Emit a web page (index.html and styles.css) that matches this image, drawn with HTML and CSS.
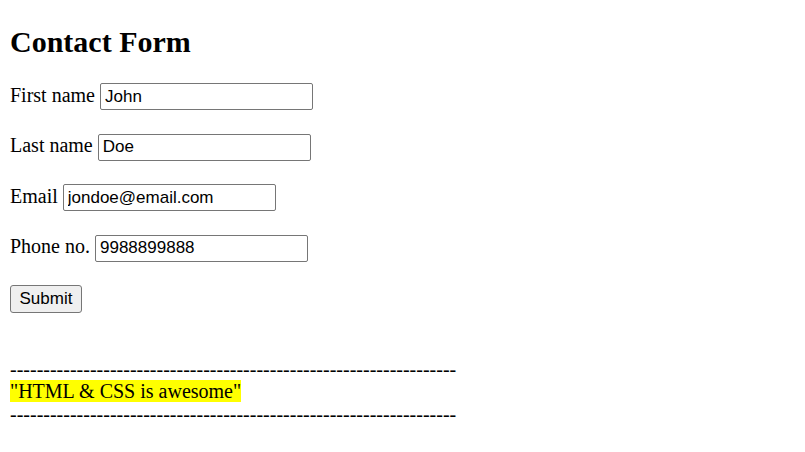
FILE: index.html
```html
<!DOCTYPE html>
<html lang="en">
<head>
<meta charset="utf-8">
<title>Contact Form</title>
<link rel="stylesheet" href="styles.css">
</head>
<body>
<section class="page">
  <h1 class="title">Contact Form</h1>
  <form class="form">
    <p class="row"><label for="fn">First name</label> <input class="field w-first" id="fn" type="text" value="John"></p>
    <p class="row"><label for="ln">Last name</label> <input class="field w-last" id="ln" type="text" value="Doe"></p>
    <p class="row"><label for="em">Email</label> <input class="field w-email" id="em" type="text" value="jondoe@email.com"></p>
    <p class="row"><label for="ph">Phone no.</label> <input class="field w-phone" id="ph" type="text" value="9988899888"></p>
    <p class="row"><button class="btn" type="button">Submit</button></p>
  </form>
  <div class="quote">
    <div class="dashes">-------------------------------------------------------------------</div>
    <div><mark class="hl">"HTML &amp; CSS is awesome"</mark></div>
    <div class="dashes">-------------------------------------------------------------------</div>
  </div>
</section>
</body>
</html>
```
FILE: styles.css
```css
html, body {
  margin: 0;
  padding: 0;
  background: #ffffff;
}
body {
  padding: 0 10px;
  font-family: "Liberation Serif", "Times New Roman", serif;
  font-size: 20px;
  color: #000;
}
.title {
  font-size: 30px;
  font-weight: bold;
  margin: 25px 0 20px;
  line-height: 1.15;
}
.form {
  margin: 0;
}
.row {
  margin: 0 0 20.5px;
  line-height: 30px;
  height: 30px;
}
.field {
  font-family: "Liberation Sans", Arial, sans-serif;
  font-size: 17px;
  color: #000;
  border: 1px solid #767676;
  border-radius: 2px;
  padding: 2px 4px;
  height: 27px;
  box-sizing: border-box;
  vertical-align: middle;
  margin: 0;
}
.w-first, .w-last, .w-email, .w-phone { width: 213px; }
.btn {
  font-family: "Liberation Sans", Arial, sans-serif;
  font-size: 17px;
  color: #000;
  background: #efefef;
  border: 1px solid #767676;
  border-radius: 3px;
  padding: 0 8px;
  width: 72px;
  height: 28px;
  vertical-align: middle;
  margin: 0;
}
.quote {
  margin-top: 46px;
  line-height: 22.5px;
}
.hl {
  background: #ffff00;
  color: #000;
}
```
